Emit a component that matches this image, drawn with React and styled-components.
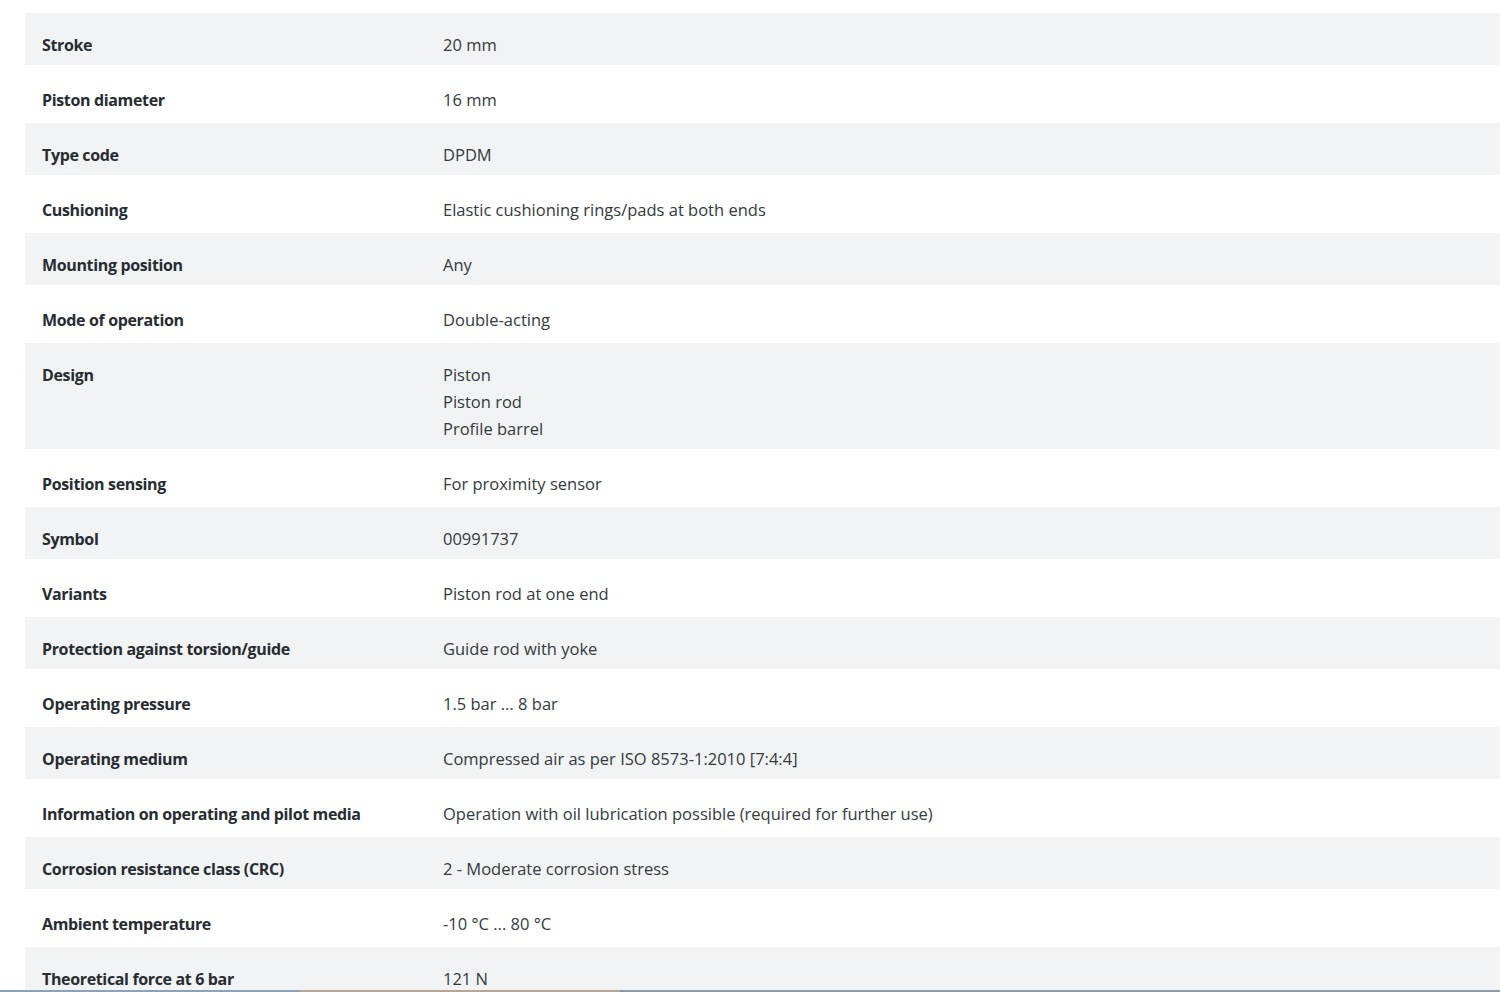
import React from 'react';
import styled, { createGlobalStyle } from 'styled-components';

const GlobalStyle = createGlobalStyle`
  html, body {
    margin: 0;
    padding: 0;
    background: #ffffff;
    overflow: hidden;
  }
  body {
    font-family: "Open Sans", "Noto Sans", Arial, sans-serif;
  }
`;

const Page = styled.div`
  height: 992px;
  overflow: hidden;
  padding: 13px 0 0 25px;
  box-sizing: border-box;
`;

const SpecTable = styled.dl`
  margin: 0;
  display: flex;
  flex-direction: column;
`;

const Row = styled.div`
  display: grid;
  grid-template-columns: 401px 1fr;
  padding: ${({ striped }) => (striped ? '18px 0 7px 17px' : '21px 0 10px 17px')};
  background: ${({ striped }) => (striped ? '#f2f3f5' : '#ffffff')};
  line-height: 27px;
  font-size: 16.5px;
`;

const Label = styled.dt`
  margin: 0;
  padding-top: 1px;
  font-size: 16px;
  line-height: 26px;
  font-weight: 700;
  color: #262c31;
  letter-spacing: -0.35px;
`;

const Value = styled.dd`
  margin: 0;
  color: #333a40;
  display: flex;
  flex-direction: column;
`;

const BottomEdge = styled.div`
  position: fixed;
  left: 0;
  right: 0;
  bottom: 0;
  height: 2px;
  background: linear-gradient(
    to right,
    #8da2b8 0,
    #8da2b8 300px,
    #b9a596 300px,
    #b9a596 620px,
    #8b9aa8 620px
  );
`;

const specs = [
  ['Stroke', ['20 mm']],
  ['Piston diameter', ['16 mm']],
  ['Type code', ['DPDM']],
  ['Cushioning', ['Elastic cushioning rings/pads at both ends']],
  ['Mounting position', ['Any']],
  ['Mode of operation', ['Double-acting']],
  ['Design', ['Piston', 'Piston rod', 'Profile barrel']],
  ['Position sensing', ['For proximity sensor']],
  ['Symbol', ['00991737']],
  ['Variants', ['Piston rod at one end']],
  ['Protection against torsion/guide', ['Guide rod with yoke']],
  ['Operating pressure', ['1.5 bar ... 8 bar']],
  ['Operating medium', ['Compressed air as per ISO 8573-1:2010 [7:4:4]']],
  ['Information on operating and pilot media', ['Operation with oil lubrication possible (required for further use)']],
  ['Corrosion resistance class (CRC)', ['2 - Moderate corrosion stress']],
  ['Ambient temperature', ['-10 °C ... 80 °C']],
  ['Theoretical force at 6 bar', ['121 N']],
];

export default function App() {
  return (
    <>
      <GlobalStyle />
      <Page>
        <SpecTable>
          {specs.map(([label, values], i) => (
            <Row key={label} striped={i % 2 === 0}>
              <Label>{label}</Label>
              <Value>
                {values.map((v) => (
                  <span key={v}>{v}</span>
                ))}
              </Value>
            </Row>
          ))}
        </SpecTable>
      </Page>
      <BottomEdge />
    </>
  );
}
